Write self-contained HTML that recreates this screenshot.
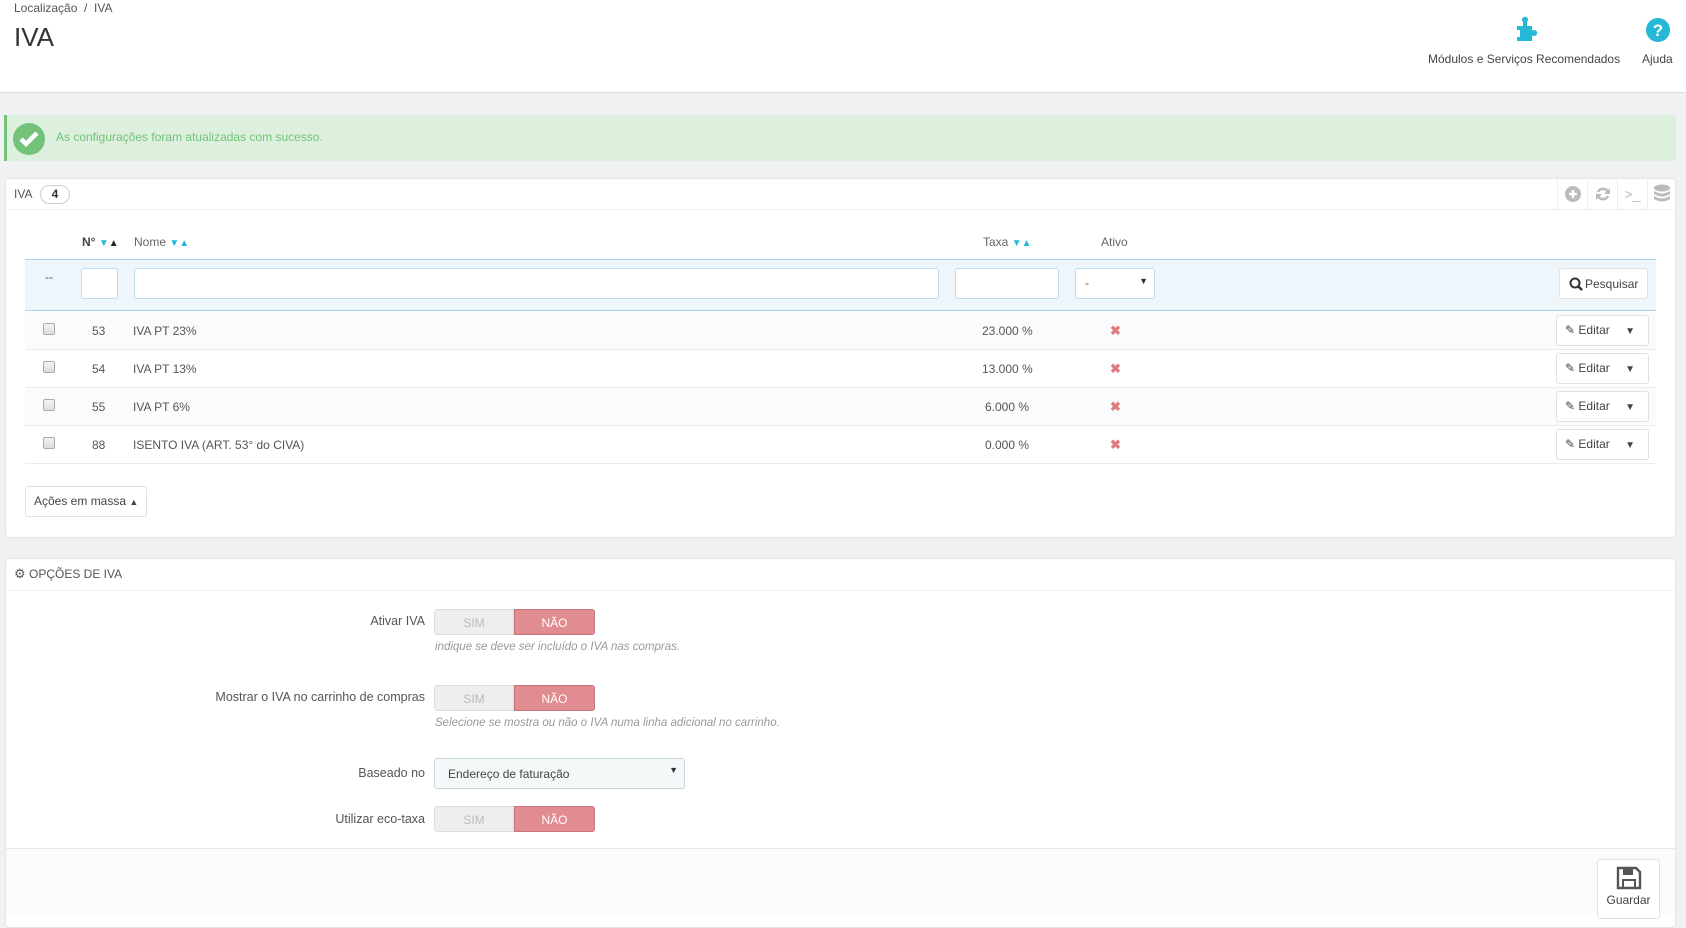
<!DOCTYPE html>
<html><head><meta charset="utf-8">
<style>
*{box-sizing:border-box;margin:0;padding:0}
body{width:1686px;height:914px;overflow:hidden;background:#eff1f2;font-family:"Liberation Sans",sans-serif;font-size:12px;color:#555;position:relative}
.a{position:absolute}
.hdr{left:0;top:0;width:1686px;height:93px;background:#fff;border-bottom:1px solid #dcdfe1}
.panel{background:#fff;border:1px solid #e2e4e6;border-radius:4px}
.inp{background:#fff;border:1px solid #bfdcec;border-radius:3px}
.btn{background:#fff;border:1px solid #dfe2e4;border-radius:3px;color:#555}
.row{left:25px;width:1631px;height:38px;border-bottom:1px solid #eaedef}
.cb{width:12px;height:12px;border:1px solid #aaa;border-radius:2px;background:linear-gradient(#f4f4f4,#ddd)}
.x{color:#e07a7e;font-weight:bold;font-size:13px}
.tg{width:161px;height:26px;border-radius:3px;overflow:hidden;display:flex}
.tg span{width:80px;height:26px;line-height:26px;text-align:center;color:#bbb;background:#eeeeee;border:1px solid #dcdcdc}
.tg span+span{width:81px;background:#e08c91;color:#fff;border-color:#c9777c}
.lbl{width:425px;text-align:right;font-size:12.5px;color:#555}
.help{font-style:italic;color:#999;font-size:11.5px}
</style></head><body>
<div class="a hdr"></div>
<div class="a" style="left:14px;top:1px;font-size:12px;color:#555">Localização &nbsp;/&nbsp; IVA</div>
<div class="a" style="left:14px;top:22px;font-size:26px;color:#333">IVA</div>
<svg class="a" style="left:1513px;top:16px" width="30" height="28" viewBox="0 0 30 28"><path fill="#25b9d7" d="M4 10h6V6a3 3 0 1 1 4 0v4h5v5a3 3 0 1 1 0 4v6H4v-4h3v-7H4z"/></svg>
<div class="a" style="left:1428px;top:52px;font-size:12px;color:#444">Módulos e Serviços Recomendados</div>
<svg class="a" style="left:1646px;top:18px" width="24" height="24" viewBox="0 0 24 24"><circle cx="12" cy="12" r="12" fill="#25b9d7"/><text x="12" y="18" text-anchor="middle" font-family="Liberation Sans" font-weight="bold" font-size="17" fill="#fff">?</text></svg>
<div class="a" style="left:1642px;top:52px;font-size:12px;color:#444">Ajuda</div>

<div class="a" style="left:4px;top:115px;width:1672px;height:46px;background:#ddf0de;border-left:3px solid #72c279"></div>
<svg class="a" style="left:13px;top:123px" width="32" height="32" viewBox="0 0 32 32"><circle cx="16" cy="16" r="16" fill="#72c279"/><path d="M8 16l5 5 11-11" stroke="#fff" stroke-width="4.5" fill="none"/></svg>
<div class="a" style="left:56px;top:130px;color:#72c279;font-size:12px">As configurações foram atualizadas com sucesso.</div>

<div class="a panel" style="left:5px;top:178px;width:1671px;height:360px"></div>
<div class="a" style="left:14px;top:187px;font-size:12px;color:#555">IVA</div>
<div class="a" style="left:40px;top:185px;width:30px;height:19px;border:1px solid #ccc;border-radius:10px;text-align:center;line-height:17px;font-weight:bold;color:#333">4</div>
<div class="a" style="left:8px;top:209px;width:1665px;border-top:1px solid #eee"></div>
<div class="a" style="left:1557px;top:179px;width:118px;height:30px;display:flex">
<div style="width:30px;border-left:1px solid #eee;display:flex;align-items:center;justify-content:center"><svg width="16" height="16"><circle cx="8" cy="8" r="8" fill="#bbb"/><path d="M8 4v8M4 8h8" stroke="#fff" stroke-width="2.5"/></svg></div>
<div style="width:30px;border-left:1px solid #eee;display:flex;align-items:center;justify-content:center"><svg width="16" height="16"><path d="M13 6A5.5 5.5 0 0 0 3 6M3 10a5.5 5.5 0 0 0 10 0" stroke="#bbb" stroke-width="2.6" fill="none"/><path d="M15 2v6h-6zM1 14V8h6z" fill="#bbb"/></svg></div>
<div style="width:30px;border-left:1px solid #eee;display:flex;align-items:center;justify-content:center;color:#bbb;font-size:14px">&gt;_</div>
<div style="width:28px;border-left:1px solid #eee;display:flex;align-items:center;justify-content:center"><svg width="16" height="20"><ellipse cx="8" cy="4" rx="8" ry="3.5" fill="#bbb"/><path d="M0 7q8 5 16 0v3q-8 5-16 0zM0 12q8 5 16 0v3q-8 5-16 0z" fill="#bbb"/></svg></div>
</div>

<div class="a" style="left:82px;top:235px;font-weight:bold;color:#444">N° <span style="color:#25b9d7;font-size:10px">▼</span><span style="color:#222;font-size:10px">▲</span></div>
<div class="a" style="left:134px;top:235px;color:#666">Nome <span style="color:#25b9d7;font-size:10px">▼▲</span></div>
<div class="a" style="left:983px;top:235px;color:#666">Taxa <span style="color:#25b9d7;font-size:10px">▼▲</span></div>
<div class="a" style="left:1101px;top:235px;color:#666">Ativo</div>

<div class="a" style="left:25px;top:259px;width:1631px;height:52px;background:#eef6fb;border-top:1px solid #a8d4ea;border-bottom:1px solid #a8d4ea"></div>
<div class="a" style="left:45px;top:270px;color:#555">--</div>
<div class="a inp" style="left:81px;top:268px;width:37px;height:31px"></div>
<div class="a inp" style="left:134px;top:268px;width:805px;height:31px"></div>
<div class="a inp" style="left:955px;top:268px;width:104px;height:31px"></div>
<div class="a inp" style="left:1075px;top:268px;width:80px;height:31px"><span class="a" style="left:9px;top:7px">-</span><span class="a" style="right:6px;top:7px;font-size:9px;color:#333">▼</span></div>
<div class="a btn" style="left:1559px;top:268px;width:89px;height:31px;color:#444"><svg class="a" style="left:9px;top:8px" width="14" height="14"><circle cx="6" cy="6" r="4.5" stroke="#333" stroke-width="2" fill="none"/><path d="M9 9l4 4" stroke="#333" stroke-width="2.5"/></svg><span class="a" style="left:25px;top:8px">Pesquisar</span></div>

<div class="a row" style="top:312px;background:#fafbfc"></div>
<div class="a row" style="top:350px"></div>
<div class="a row" style="top:388px;background:#fafbfc"></div>
<div class="a row" style="top:426px"></div>

<div class="a cb" style="left:43px;top:323px"></div>
<div class="a cb" style="left:43px;top:361px"></div>
<div class="a cb" style="left:43px;top:399px"></div>
<div class="a cb" style="left:43px;top:437px"></div>
<div class="a" style="left:92px;top:324px">53</div><div class="a" style="left:133px;top:324px">IVA PT 23%</div><div class="a" style="left:982px;top:324px">23.000 %</div><div class="a x" style="left:1110px;top:323px">✖</div>
<div class="a" style="left:92px;top:362px">54</div><div class="a" style="left:133px;top:362px">IVA PT 13%</div><div class="a" style="left:982px;top:362px">13.000 %</div><div class="a x" style="left:1110px;top:361px">✖</div>
<div class="a" style="left:92px;top:400px">55</div><div class="a" style="left:133px;top:400px">IVA PT 6%</div><div class="a" style="left:985px;top:400px">6.000 %</div><div class="a x" style="left:1110px;top:399px">✖</div>
<div class="a" style="left:92px;top:438px">88</div><div class="a" style="left:133px;top:438px">ISENTO IVA (ART. 53° do CIVA)</div><div class="a" style="left:985px;top:438px">0.000 %</div><div class="a x" style="left:1110px;top:437px">✖</div>

<div class="a btn" style="left:1556px;top:315px;width:93px;height:31px;line-height:29px;padding-left:8px;color:#444">✎ Editar <span style="margin-left:12px;font-size:10px">▼</span></div>
<div class="a btn" style="left:1556px;top:353px;width:93px;height:31px;line-height:29px;padding-left:8px;color:#444">✎ Editar <span style="margin-left:12px;font-size:10px">▼</span></div>
<div class="a btn" style="left:1556px;top:391px;width:93px;height:31px;line-height:29px;padding-left:8px;color:#444">✎ Editar <span style="margin-left:12px;font-size:10px">▼</span></div>
<div class="a btn" style="left:1556px;top:429px;width:93px;height:31px;line-height:29px;padding-left:8px;color:#444">✎ Editar <span style="margin-left:12px;font-size:10px">▼</span></div>

<div class="a btn" style="left:25px;top:486px;width:122px;height:31px;line-height:29px;padding-left:8px;color:#444">Ações em massa <span style="font-size:9px">▲</span></div>

<div class="a panel" style="left:5px;top:558px;width:1671px;height:370px"></div>
<div class="a" style="left:14px;top:566px;font-size:12px;color:#555"><span style="font-size:13px">⚙</span> OPÇÕES DE IVA</div>
<div class="a" style="left:8px;top:590px;width:1665px;border-top:1px solid #eee"></div>

<div class="a lbl" style="left:0;top:614px">Ativar IVA</div>
<div class="a tg" style="left:434px;top:609px"><span>SIM</span><span>NÃO</span></div>
<div class="a help" style="left:435px;top:641px">indique se deve ser incluído o IVA nas compras.</div>

<div class="a lbl" style="left:0;top:690px">Mostrar o IVA no carrinho de compras</div>
<div class="a tg" style="left:434px;top:685px"><span>SIM</span><span>NÃO</span></div>
<div class="a help" style="left:435px;top:717px">Selecione se mostra ou não o IVA numa linha adicional no carrinho.</div>

<div class="a lbl" style="left:0;top:766px">Baseado no</div>
<div class="a" style="left:434px;top:758px;width:251px;height:31px;background:#f5f8f9;border:1px solid #c7d6db;border-radius:3px"><span class="a" style="left:13px;top:8px;color:#444">Endereço de faturação</span><span class="a" style="right:6px;top:6px;font-size:9px;color:#333">▼</span></div>

<div class="a lbl" style="left:0;top:812px">Utilizar eco-taxa</div>
<div class="a tg" style="left:434px;top:806px"><span>SIM</span><span>NÃO</span></div>

<div class="a" style="left:6px;top:848px;width:1669px;height:66px;background:#fafbfc;border-top:1px solid #e6e8ea"></div>
<div class="a btn" style="left:1597px;top:859px;width:63px;height:60px;text-align:center">
<svg style="margin-top:6px" width="26" height="24" viewBox="0 0 26 24"><path d="M2 2h18l4 4v16H2z" fill="none" stroke="#555" stroke-width="2.4"/><rect x="7" y="2" width="10" height="7" fill="#555"/><rect x="7" y="14" width="12" height="8" fill="none" stroke="#555" stroke-width="2"/></svg>
<div style="font-size:12px;color:#444">Guardar</div></div>
</body></html>
